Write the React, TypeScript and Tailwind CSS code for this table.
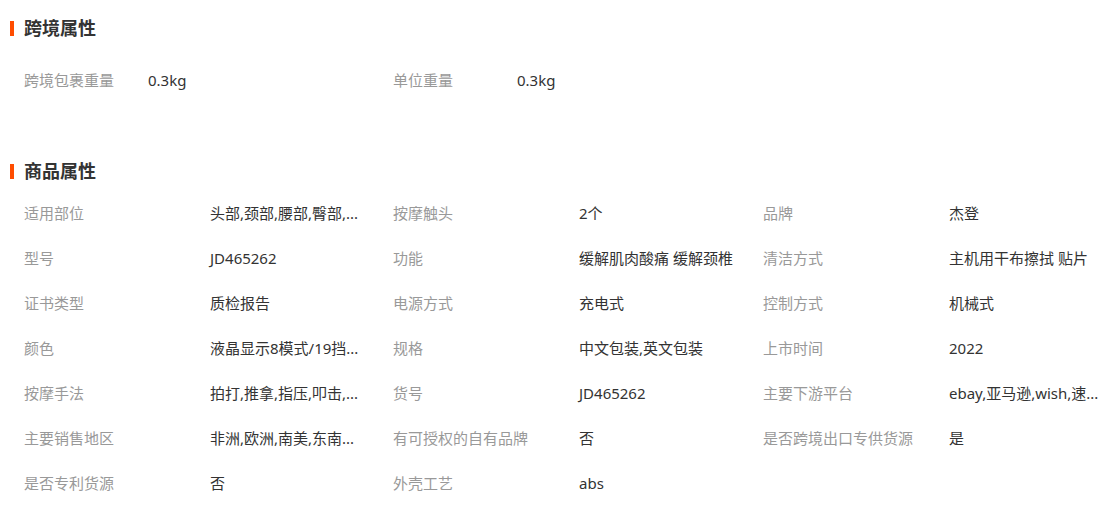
import React from "react";

const font = { fontFamily: '"Noto Sans", "Noto Sans CJK SC", sans-serif' };

type Item = [string, string];

const cross: Item[] = [
  ["跨境包裹重量", "0.3kg"],
  ["单位重量", "0.3kg"],
];

const goods: Item[] = [
  ["适用部位", "头部,颈部,腰部,臀部,..."],
  ["按摩触头", "2个"],
  ["品牌", "杰登"],
  ["型号", "JD465262"],
  ["功能", "缓解肌肉酸痛 缓解颈椎"],
  ["清洁方式", "主机用干布擦拭 贴片"],
  ["证书类型", "质检报告"],
  ["电源方式", "充电式"],
  ["控制方式", "机械式"],
  ["颜色", "液晶显示8模式/19挡..."],
  ["规格", "中文包装,英文包装"],
  ["上市时间", "2022"],
  ["按摩手法", "拍打,推拿,指压,叩击,..."],
  ["货号", "JD465262"],
  ["主要下游平台", "ebay,亚马逊,wish,速..."],
  ["主要销售地区", "非洲,欧洲,南美,东南..."],
  ["有可授权的自有品牌", "否"],
  ["是否跨境出口专供货源", "是"],
  ["是否专利货源", "否"],
  ["外壳工艺", "abs"],
];

function Title({ text }: { text: string }) {
  return (
    <div className="flex items-center h-[40px]">
      <div className="w-[4px] h-[15px] bg-[#ff4d00]" />
      <div className="ml-[10px] text-[18px] font-bold text-[#333333] leading-none">{text}</div>
    </div>
  );
}

export default function App() {
  return (
    <div className="w-[1120px] h-[506px] bg-white overflow-hidden px-[10px]" style={font}>
      <div className="mt-[8px]">
        <Title text="跨境属性" />
      </div>
      <div className="pt-[10px] pl-[14px] grid grid-cols-[369px_370px_1fr]">
        {cross.map(([k, v]) => (
          <div key={k} className="flex items-center h-[45px] text-[15px]">
            <div className="w-[124px] text-[#999999] whitespace-nowrap">{k}</div>
            <div className="text-[#333333] whitespace-nowrap">{v}</div>
          </div>
        ))}
      </div>
      <div className="mt-[48px]">
        <Title text="商品属性" />
      </div>
      <div className="pl-[14px] grid grid-cols-[369px_370px_1fr]">
        {goods.map(([k, v]) => (
          <div key={k} className="flex items-center h-[45px] text-[15px]">
            <div className="w-[186px] text-[#999999] whitespace-nowrap">{k}</div>
            <div className="text-[#333333] whitespace-nowrap">{v}</div>
          </div>
        ))}
      </div>
    </div>
  );
}
